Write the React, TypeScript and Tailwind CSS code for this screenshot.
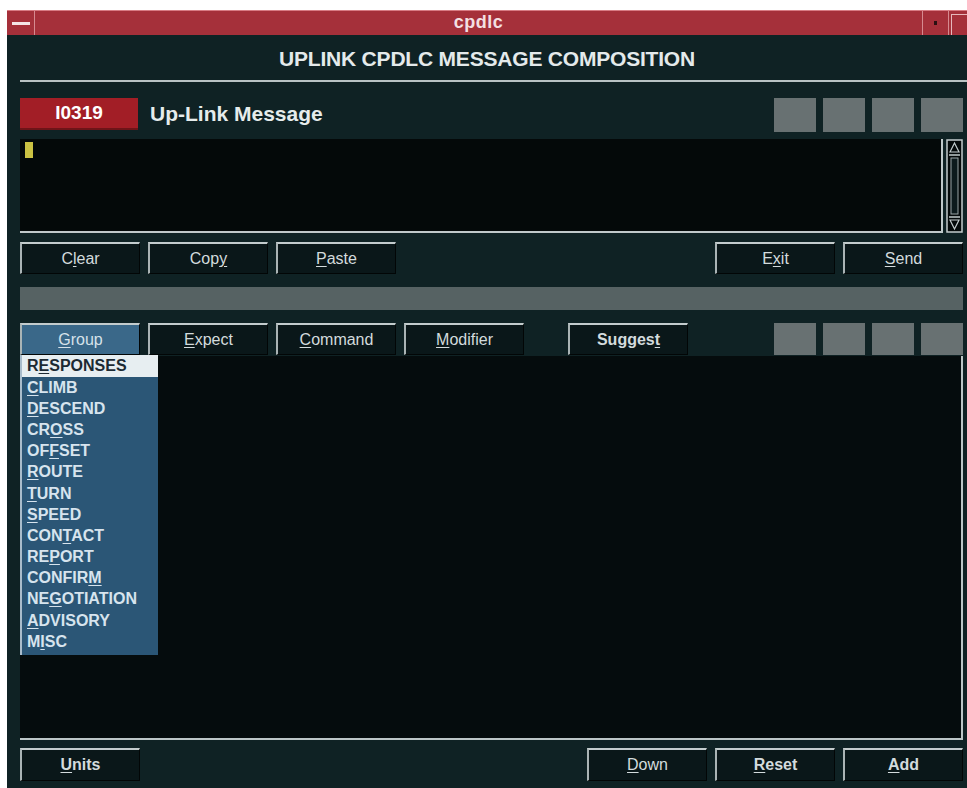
import React from 'react';

const font = { fontFamily: '"Liberation Sans", Arial, sans-serif' };

// Label with one underlined mnemonic letter
function Mnemonic({ text, at }: { text: string; at: number }) {
  return (
    <span>
      {text.slice(0, at)}
      <span className="underline underline-offset-2 decoration-1">{text.charAt(at)}</span>
      {text.slice(at + 1)}
    </span>
  );
}

interface BtnProps {
  text: string;
  at: number;
  bold?: boolean;
  active?: boolean;
}

function Btn({ text, at, bold, active }: BtnProps) {
  return (
    <div
      className={`w-[120px] h-full flex items-center justify-center border-t-2 border-l-2 border-t-[#c3cccd] border-l-[#aab4b5] border-b border-r border-b-[#020606] border-r-[#020606] text-[16px] ${
        active ? 'bg-[#3a6889] text-[#d6e2ea]' : 'bg-[#0a1719] text-[#d3dbdd]'
      } ${bold ? 'font-bold' : ''}`}>
      <Mnemonic text={text} at={at} />
    </div>);

}

function GreySquares() {
  return (
    <div className="flex gap-[7px] h-full">
      {[0, 1, 2, 3].map((i) =>
      <div key={i} className="w-[42px] h-full bg-[#687172]" />
      )}
    </div>);

}

const groups: [string, number][] = [
['CLIMB', 0],
['DESCEND', 0],
['CROSS', 2],
['OFFSET', 2],
['ROUTE', 0],
['TURN', 0],
['SPEED', 0],
['CONTACT', 3],
['REPORT', 2],
['CONFIRM', 6],
['NEGOTIATION', 2],
['ADVISORY', 0],
['MISC', 1]];


function ScrollBar() {
  return (
    <svg width="17" height="94" viewBox="0 0 17 94" className="shrink-0">
      <rect x="1" y="1" width="15" height="92" fill="#040909" stroke="#c3cccd" strokeWidth="1.5" />
      <path d="M4 13 L8.5 4 L13 13 Z" fill="none" stroke="#c3cccd" strokeWidth="1.2" />
      <line x1="3" y1="16" x2="14" y2="16" stroke="#c3cccd" strokeWidth="1.5" />
      <rect x="5" y="19" width="7" height="56" fill="#0d1a1c" stroke="#9aa4a5" strokeWidth="1" />
      <line x1="3" y1="78" x2="14" y2="78" stroke="#c3cccd" strokeWidth="1.5" />
      <path d="M4 81 L8.5 90 L13 81 Z" fill="none" stroke="#c3cccd" strokeWidth="1.2" />
    </svg>);

}

export default function App() {
  return (
    <div className="w-[967px] h-[788px] bg-white pl-[7px] pt-[10px] flex overflow-hidden" style={font}>
      <div className="flex-1 flex flex-col bg-[#0f2224]">
        {/* window title bar */}
        <div className="h-[25px] shrink-0 flex items-stretch bg-[#a5303a] border-t border-t-[#d87c84]">
          <div className="w-[28px] flex items-center justify-center border-r border-r-[#d68a90]">
            <div className="w-[18px] h-[3px] bg-[#f4e4e6]" />
          </div>
          <div className="flex-1 flex items-center justify-center text-[18px] font-bold text-[#f3dfe2] tracking-[0.5px] pb-[2px]">
            cpdlc
          </div>
          <div className="w-[27px] flex items-center justify-center border-l border-l-[#d68a90] border-r border-r-[#d68a90]">
            <div className="w-[3px] h-[4px] bg-[#2a1012]" />
          </div>
          <div className="w-[16px] ml-[2px] mt-[3px] border-t border-l border-[#e6b8bc]" />
        </div>

        {/* heading */}
        <div className="h-[45px] shrink-0 flex items-center justify-center text-[21px] font-bold text-[#e4eaeb] tracking-[-0.2px] pt-[2px]">
          UPLINK CPDLC MESSAGE COMPOSITION
        </div>
        <div className="h-[2px] ml-[13px] shrink-0 bg-[#b9c3c4]" />

        <div className="flex-1 flex flex-col pl-[13px] pr-[4px]">
          {/* message header */}
          <div className="mt-[16px] h-[34px] flex items-start">
            <div className="w-[118px] h-[32px] bg-[#a21e26] border-b-2 border-b-[#6e1418] flex items-center justify-center text-white text-[19px] font-bold">
              I0319
            </div>
            <div className="ml-[12px] h-[32px] flex items-center text-[21px] font-bold text-[#e6ecec]">
              Up-Link Message
            </div>
            <div className="ml-auto h-full">
              <GreySquares />
            </div>
          </div>

          {/* message text area */}
          <div className="mt-[7px] h-[94px] flex gap-[3px]">
            <div className="flex-1 bg-[#040909] border-r-2 border-b-2 border-[#c0c9ca] pt-[3px] pl-[5px]">
              <div className="w-[8px] h-[16px] bg-[#cbc243]" />
            </div>
            <ScrollBar />
          </div>

          {/* edit actions */}
          <div className="mt-[9px] h-[32px] flex gap-[8px]">
            <Btn text="Clear" at={1} />
            <Btn text="Copy" at={3} />
            <Btn text="Paste" at={0} />
            <div className="flex-1" />
            <Btn text="Exit" at={1} />
            <Btn text="Send" at={0} />
          </div>

          {/* status strip */}
          <div className="mt-[13px] h-[23px] bg-[#566263]" />

          {/* composition tabs */}
          <div className="mt-[13px] h-[32px] flex gap-[8px]">
            <Btn text="Group" at={0} active />
            <Btn text="Expect" at={0} />
            <Btn text="Command" at={0} />
            <Btn text="Modifier" at={0} />
            <div className="w-[28px]" />
            <Btn text="Suggest" at={6} bold />
            <div className="flex-1" />
            <GreySquares />
          </div>

          {/* element panel */}
          <div className="relative mt-[1px] h-[384px] bg-[#050c0d] border-r-2 border-b-2 border-[#bcc6c7]">
            <div className="absolute left-0 top-[-1px] w-[138px] bg-[#2b5676] border-l-2 border-l-[#a9bccb] pb-[3px] text-[16px] font-bold text-[#d7e4ee]">
              <div className="h-[22px] bg-[#e7eef1] text-[#1c2a33] pl-[5px] flex items-center">
                <Mnemonic text="RESPONSES" at={1} />
              </div>
              {groups.map(([g, i]) =>
              <div key={g} className="h-[21.2px] pl-[5px] flex items-center">
                  <Mnemonic text={g} at={i} />
                </div>
              )}
            </div>
          </div>

          {/* bottom actions */}
          <div className="mt-[8px] h-[33px] flex gap-[8px]">
            <Btn text="Units" at={0} bold />
            <div className="flex-1" />
            <Btn text="Down" at={0} />
            <Btn text="Reset" at={0} bold />
            <Btn text="Add" at={0} bold />
          </div>
        </div>
      </div>
    </div>);

}
